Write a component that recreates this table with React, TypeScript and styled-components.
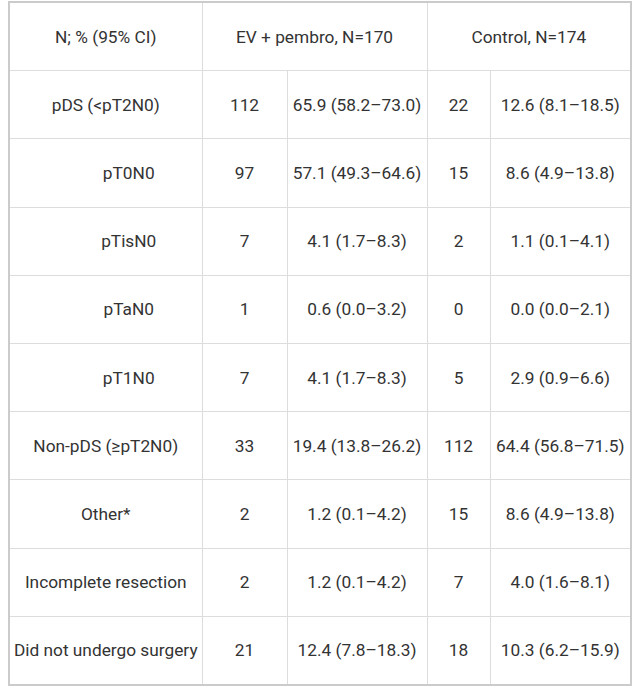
import React from "react";
import styled, { createGlobalStyle } from "styled-components";

type Row = {
  label: string;
  sub?: boolean;
  evN: string;
  evPct: string;
  ctN: string;
  ctPct: string;
};

const rows: Row[] = [
  { label: "pDS (<pT2N0)", evN: "112", evPct: "65.9 (58.2–73.0)", ctN: "22", ctPct: "12.6 (8.1–18.5)" },
  { label: "pT0N0", sub: true, evN: "97", evPct: "57.1 (49.3–64.6)", ctN: "15", ctPct: "8.6 (4.9–13.8)" },
  { label: "pTisN0", sub: true, evN: "7", evPct: "4.1 (1.7–8.3)", ctN: "2", ctPct: "1.1 (0.1–4.1)" },
  { label: "pTaN0", sub: true, evN: "1", evPct: "0.6 (0.0–3.2)", ctN: "0", ctPct: "0.0 (0.0–2.1)" },
  { label: "pT1N0", sub: true, evN: "7", evPct: "4.1 (1.7–8.3)", ctN: "5", ctPct: "2.9 (0.9–6.6)" },
  { label: "Non-pDS (≥pT2N0)", evN: "33", evPct: "19.4 (13.8–26.2)", ctN: "112", ctPct: "64.4 (56.8–71.5)" },
  { label: "Other*", evN: "2", evPct: "1.2 (0.1–4.2)", ctN: "15", ctPct: "8.6 (4.9–13.8)" },
  { label: "Incomplete resection", evN: "2", evPct: "1.2 (0.1–4.2)", ctN: "7", ctPct: "4.0 (1.6–8.1)" },
  { label: "Did not undergo surgery", evN: "21", evPct: "12.4 (7.8–18.3)", ctN: "18", ctPct: "10.3 (6.2–15.9)" },
];

const App = () => {
  return (
    <>
      <GlobalStyle />
      <Page>
        <Table>
          <colgroup>
            <col style={{ width: 193 }} />
            <col style={{ width: 85 }} />
            <col style={{ width: 140 }} />
            <col style={{ width: 63 }} />
            <col style={{ width: 141 }} />
          </colgroup>
          <thead>
            <tr>
              <HeadCell>N; % (95% CI)</HeadCell>
              <HeadCell colSpan={2}>EV + pembro, N=170</HeadCell>
              <HeadCell colSpan={2}>Control, N=174</HeadCell>
            </tr>
          </thead>
          <tbody>
            {rows.map((row) => (
              <tr key={row.label}>
                <Cell $indent={row.sub}>{row.label}</Cell>
                <Cell>{row.evN}</Cell>
                <Cell>{row.evPct}</Cell>
                <Cell>{row.ctN}</Cell>
                <Cell>{row.ctPct}</Cell>
              </tr>
            ))}
          </tbody>
        </Table>
      </Page>
    </>
  );
};

export default App;

const GlobalStyle = createGlobalStyle`
  body {
    margin: 0;
    background: #ffffff;
    font-family: Roboto, "Liberation Sans", sans-serif;
  }
`;

const Page = styled.div`
  padding: 1px 0 0 8px;
`;

const Table = styled.table`
  border-collapse: collapse;
  table-layout: fixed;
  width: 622px;
  border: 2px solid #cbcbcb;
  color: #333333;
  font-size: 17.3px;
`;

const HeadCell = styled.th`
  height: 67.2px;
  padding: 0 2px;
  border: 1px solid #dddddd;
  font-weight: 400;
  text-align: center;
  vertical-align: middle;
  white-space: nowrap;
`;

const Cell = styled.td<{ $indent?: boolean }>`
  height: 67.2px;
  padding: 0 2px 0 ${(p) => (p.$indent ? "48px" : "2px")};
  border: 1px solid #dddddd;
  text-align: center;
  vertical-align: middle;
  white-space: nowrap;
`;
